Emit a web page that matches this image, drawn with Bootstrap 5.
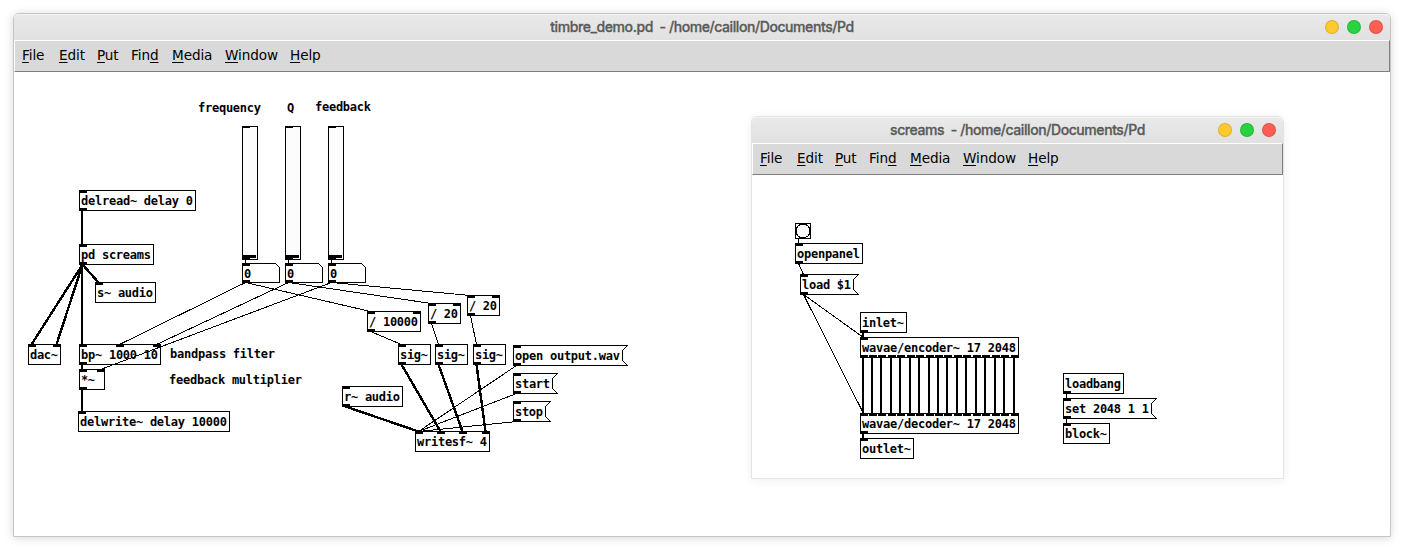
<!DOCTYPE html>
<html lang="en">
<head>
<meta charset="utf-8">
<title>timbre_demo.pd</title>
<link href="https://cdn.jsdelivr.net/npm/bootstrap@5.3.0/dist/css/bootstrap.min.css" rel="stylesheet">
<style>
body{height:550px;padding:13px;background:#fff;overflow:hidden}
.pd-window{width:1378px;height:524px;background:#fff;border:1px solid #c6c6c6;border-radius:6px 6px 0 0;box-shadow:0 1px 10px rgba(0,0,0,.16)}
.pd-sub{left:751px;top:116px;width:533px;height:363px;border-color:#e4e4e4;box-shadow:0 1px 10px rgba(0,0,0,.07)}
.pd-title{height:26px;border-radius:5px 5px 0 0;border-top:1px solid #f4f4f4;background:linear-gradient(#e9e9e9,#e1e1e1);font:500 14px/24px Inter,"Liberation Sans",sans-serif;letter-spacing:-.42px;-webkit-text-stroke:.3px #5a5a5a;color:#5a5a5a;white-space:pre}
.pd-dots{right:7px;top:5px;gap:8px}
.pd-dots i{width:14px;height:14px;border-radius:50%;border:1px solid rgba(0,0,0,.12);background:#ffc92f;background-clip:border-box}
.pd-dots i:nth-child(2){background:#28d33f}
.pd-dots i:nth-child(3){background:#ff5f52}
.pd-menu{height:32px;border:1px solid #fff;border-right-color:#7e7e7e;border-bottom-color:#7e7e7e;background:#d9d9d9;padding:0 0 0 7px;font:13.6px/28px "DejaVu Sans",sans-serif;color:#000}
.pd-menu a{color:#000;text-decoration:none;white-space:nowrap;flex:none;letter-spacing:-.1px}
.pd-menu u{text-decoration-thickness:1px;text-underline-offset:2px}
.pd-menu a:nth-child(1){width:37px}.pd-menu a:nth-child(2){width:38px}.pd-menu a:nth-child(3){width:34px}
.pd-menu a:nth-child(4){width:41px}.pd-menu a:nth-child(5){width:53px}.pd-menu a:nth-child(6){width:65px}
.pd-canvas{shape-rendering:crispEdges;fill:none;stroke:#000}
.pd-canvas text{font:bold 12px "DejaVu Sans Mono",monospace;fill:#000;stroke:none;white-space:pre}
.pd-canvas .io{fill:#000;stroke:none}
.pd-canvas .gui{fill:#fcfcfc}
</style>
</head>
<body>
<main class="pd-window">
  <header class="pd-title position-relative text-center"><span>timbre_demo.pd  - /home/caillon/Documents/Pd</span>
    <div class="pd-dots position-absolute d-flex"><i></i><i></i><i></i></div></header>
  <nav class="pd-menu d-flex"><a><u>F</u>ile</a><a><u>E</u>dit</a><a><u>P</u>ut</a><a>Fin<u>d</u></a><a><u>M</u>edia</a><a><u>W</u>indow</a><a><u>H</u>elp</a></nav>
  <svg class="pd-canvas d-block" id="main" width="1376" height="464" viewBox="14 72 1376 464"></svg>
</main>
<section class="pd-window pd-sub position-absolute">
  <header class="pd-title position-relative text-center"><span>screams  - /home/caillon/Documents/Pd</span>
    <div class="pd-dots position-absolute d-flex"><i></i><i></i><i></i></div></header>
  <nav class="pd-menu d-flex"><a><u>F</u>ile</a><a><u>E</u>dit</a><a><u>P</u>ut</a><a>Fin<u>d</u></a><a><u>M</u>edia</a><a><u>W</u>indow</a><a><u>H</u>elp</a></nav>
  <svg class="pd-canvas d-block" id="sub" width="531" height="303" viewBox="752 175 531 303"></svg>
</section>
<script src="https://cdn.jsdelivr.net/npm/bootstrap@5.3.0/dist/js/bootstrap.bundle.min.js"></script>
<script>
// node: [kind, x, y, text, inlets, outlets]; wire: [from, outlet, to, inlet, signal?]
const patches = {
  main: {
    nodes: [
      ['obj',79,190,'delread~ delay 0',1,1],['obj',79,244,'pd screams',1,1],['obj',95,282,'s~ audio',1,0],
      ['obj',28,344,'dac~',2,0],['obj',79,344,'bp~ 1000 10',3,1],['obj',79,369,'*~',2,1],
      ['obj',78,411,'delwrite~ delay 10000',1,0],
      ['sld',242,126,'',1,1],['sld',285,126,'',1,1],['sld',328,126,'',1,1],
      ['num',242,263,'0',1,1],['num',285,263,'0',1,1],['num',328,263,'0',1,1],
      ['obj',367,311,'/ 10000',2,1],['obj',428,303,'/ 20',2,1],['obj',467,295,'/ 20',2,1],
      ['obj',398,344,'sig~',1,1],['obj',435,344,'sig~',1,1],['obj',473,344,'sig~',1,1],
      ['obj',342,386,'r~ audio',1,1],['obj',415,431,'writesf~ 4',4,0],
      ['msg',513,345,'open output.wav',1,1],['msg',513,373,'start',1,1],['msg',513,401,'stop',1,1],
      ['txt',196,97,'frequency',0,0],['txt',285,97,'Q',0,0],['txt',313,96,'feedback',0,0],
      ['txt',168,343,'bandpass filter',0,0],['txt',167,369,'feedback multiplier',0,0]
    ],
    wires: [[0,0,1,0,1],[1,0,2,0,1],[1,0,3,0,1],[1,0,3,1,1],[1,0,4,0,1],[4,0,5,0,1],[5,0,6,0,1],
      [7,0,10,0],[8,0,11,0],[9,0,12,0],[10,0,4,1],[11,0,4,2],[12,0,5,1],[10,0,13,0],[11,0,14,0],[12,0,15,0],
      [13,0,16,0],[14,0,17,0],[15,0,18,0],[16,0,20,1,1],[17,0,20,2,1],[18,0,20,3,1],[19,0,20,0,1],
      [21,0,20,0],[22,0,20,0],[23,0,20,0]]
  },
  sub: {
    nodes: [
      ['bng',795,223,'',1,1],['obj',795,243,'openpanel',1,1],['msg',800,274,'load $1',1,1],
      ['obj',860,312,'inlet~',0,1],['obj',860,337,'wavae/encoder~ 17 2048',1,17],
      ['obj',860,413,'wavae/decoder~ 17 2048',17,1],['obj',860,438,'outlet~',1,0],
      ['obj',1063,373,'loadbang',0,1],['msg',1063,398,'set 2048 1 1',1,1],['obj',1063,423,'block~',1,0]
    ],
    wires: [[0,0,1,0],[1,0,2,0],[2,0,4,0],[2,0,5,0],[3,0,4,0,1],[5,0,6,0,1],[7,0,8,0],[8,0,9,0]]
  }
};
for (let i = 0; i < 17; i++) patches.sub.wires.push([4, i, 5, i, 1]);

const size = ([kind,,,t]) => kind === 'sld' ? [15,133] : kind === 'num' ? [37,19] : kind === 'bng' ? [15,15]
  : [Math.max(t.length, 3) * 7 + 4, 20];
const port = (x, w, i, n) => x + (n > 1 ? Math.floor((w - 7) * i / (n - 1)) : 0);

for (const [id, {nodes, wires}] of Object.entries(patches)) {
  let s = '';
  for (const n of nodes) {
    const [kind, x, y, t, ins, outs] = n, [w, h] = size(n), X = x + .5, Y = y + .5;
    if (kind === 'obj') s += `<rect x="${X}" y="${Y}" width="${w}" height="${h}"/>`;
    if (kind === 'msg') s += `<path d="M${X} ${Y}h${w+5}l-5 5v${h-10}l5 5h${-w-5}z"/>`;
    if (kind === 'num') s += `<path d="M${X} ${Y}h${w-4}l4 4v${h-4}h${-w}z"/>`;
    if (kind === 'sld') s += `<rect class="gui" x="${X}" y="${Y}" width="${w}" height="${h}"/><rect class="io" x="${x}" y="${y+129}" width="14" height="3"/>`;
    if (kind === 'bng') s += `<rect class="gui" x="${X}" y="${Y}" width="${w}" height="${h}"/><circle cx="${X+7.5}" cy="${Y+7.5}" r="7"/>`;
    const ph = kind === 'sld' ? 2 : kind === 'bng' ? 1 : 3;
    for (let i = 0; i < ins; i++) s += `<rect class="io" x="${port(x,w,i,ins)}" y="${y}" width="8" height="${ph}"/>`;
    for (let i = 0; i < outs; i++) s += `<rect class="io" x="${port(x,w,i,outs)}" y="${y+h+1-ph}" width="8" height="${ph}"/>`;
    if (t) s += `<text x="${x+2}" y="${y+15}" textLength="${t.length*7}">${t}</text>`;
  }
  for (const [a, o, b, i, sig] of wires) {
    const A = nodes[a], B = nodes[b], [aw, ah] = size(A), [bw] = size(B);
    let x1 = port(A[1],aw,o,A[5]) + 3, x2 = port(B[1],bw,i,B[4]) + 3;
    // near-vertical signal cords snap to a straight two-pixel line
    if (sig && Math.abs(x1 - x2) < 2) x2 = x1;
    const straight = x1 === x2, d = sig && straight ? 0 : .5;
    s += `<path stroke-width="${sig ? (straight ? 2 : 2.4) : 1}" d="M${x1+d} ${A[2]+ah+.5}L${x2+d} ${B[2]+.5}"/>`;
  }
  document.getElementById(id).innerHTML = s;
}
</script>
</body>
</html>
